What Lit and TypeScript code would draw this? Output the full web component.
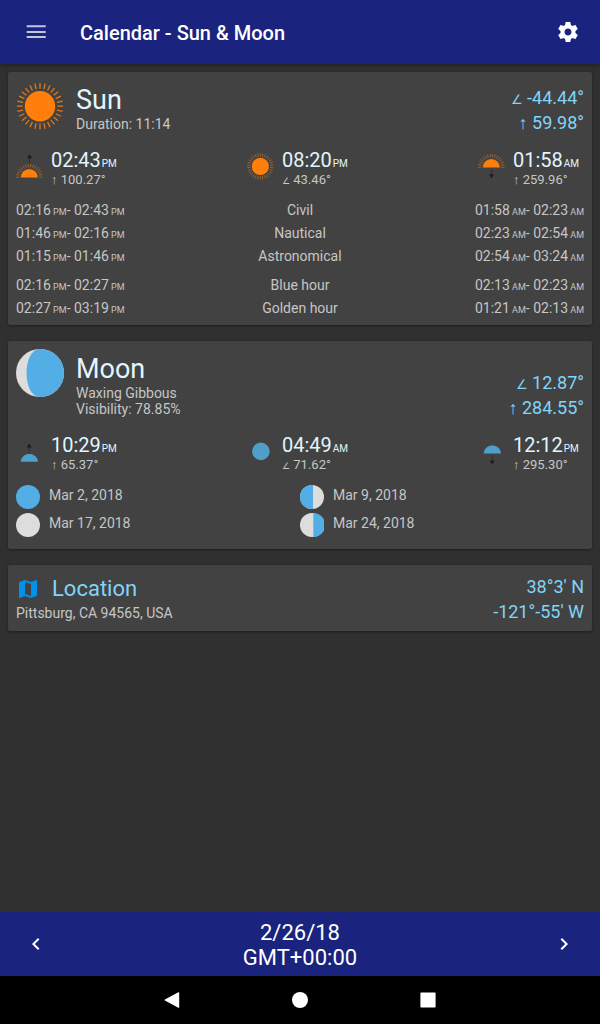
import { LitElement, html, svg, css } from "lit";
import { customElement, property } from "lit/decorators.js";

type EventKind = "rise" | "transit" | "set";

interface SkyEvent {
  kind: EventKind;
  label: string;
  time: string;
  half: string;
  sign: "up" | "angle";
  value: string;
}

interface Span {
  name: string;
  morning: [string, string];
  evening: [string, string];
}

const SUN_EVENTS: SkyEvent[] = [
  { kind: "rise", label: "Sunrise", time: "02:43", half: "PM", sign: "up", value: "100.27°" },
  { kind: "transit", label: "Solar noon", time: "08:20", half: "PM", sign: "angle", value: "43.46°" },
  { kind: "set", label: "Sunset", time: "01:58", half: "AM", sign: "up", value: "259.96°" },
];

const MOON_EVENTS: SkyEvent[] = [
  { kind: "rise", label: "Moonrise", time: "10:29", half: "PM", sign: "up", value: "65.37°" },
  { kind: "transit", label: "Moon transit", time: "04:49", half: "AM", sign: "angle", value: "71.62°" },
  { kind: "set", label: "Moonset", time: "12:12", half: "PM", sign: "up", value: "295.30°" },
];

const TWILIGHT: Span[] = [
  { name: "Civil", morning: ["02:16", "02:43"], evening: ["01:58", "02:23"] },
  { name: "Nautical", morning: ["01:46", "02:16"], evening: ["02:23", "02:54"] },
  { name: "Astronomical", morning: ["01:15", "01:46"], evening: ["02:54", "03:24"] },
];

const HOURS: Span[] = [
  { name: "Blue hour", morning: ["02:16", "02:27"], evening: ["02:13", "02:23"] },
  { name: "Golden hour", morning: ["02:27", "03:19"], evening: ["01:21", "02:13"] },
];

const PHASES = [
  { date: "Mar 2, 2018", shape: "full" },
  { date: "Mar 9, 2018", shape: "last" },
  { date: "Mar 17, 2018", shape: "new" },
  { date: "Mar 24, 2018", shape: "first" },
];

const sign = (kind: "up" | "angle") =>
  kind === "up"
    ? html`<span class="sign">↑</span>`
    : html`<span class="sign angle">∠</span>`;

/* Zero line height keeps these small runs from stretching the line they sit in. */
const inlineStyles = css`
  .sign {
    font-family: "Liberation Sans", sans-serif;
    line-height: 0;
  }
  .angle {
    font-family: "DejaVu Sans", sans-serif;
    font-size: 13px;
  }
  .half {
    font-size: 9px;
    line-height: 0;
  }
`;

/* Rays spaced evenly on a circle, from angle "from" to angle "to" in degrees. */
const rays = (cx: number, cy: number, r1: number, r2: number, step: number, from: number, to: number) => {
  let d = "";
  for (let a = from; a <= to; a += step) {
    const t = (a * Math.PI) / 180;
    const x = Math.cos(t);
    const y = Math.sin(t);
    d += `M${(cx + x * r1).toFixed(2)} ${(cy - y * r1).toFixed(2)}L${(cx + x * r2).toFixed(2)} ${(cy - y * r2).toFixed(2)}`;
  }
  return d;
};

@customElement("sky-icon")
class SkyIcon extends LitElement {
  @property() body: "sun" | "moon" = "sun";
  @property() kind: EventKind = "rise";

  static styles = css`
    :host {
      display: block;
      width: 27px;
      height: 28px;
    }
    svg {
      display: block;
    }
  `;

  private sun() {
    if (this.kind === "transit") {
      return svg`
        <circle cx="13.3" cy="13.4" r="8.6" fill="#ff7f0a"></circle>
        <path d=${rays(13.3, 13.4, 9.9, 13.2, 12, 6, 365)} stroke="#c96f1e" stroke-width="0.7"></path>`;
    }
    const y = this.kind === "rise" ? 24.6 : 14.6;
    return svg`
      <path d="M4.7 ${y}a8.6 8.6 0 0 1 17.2 0z" fill="#ff7f0a"></path>
      <path d=${rays(13.3, y - 0.4, 9.9, 13.3, 12, 0, 180)} stroke="#c96f1e" stroke-width="0.7"></path>
      ${this.kind === "rise"
        ? svg`<path d="M13.5 1.2l2.5 4h-5z" fill="#1c1c1c"></path><path d="M13.5 5v5" stroke="#262626" stroke-width="0.7"></path>`
        : svg`<path d="M13.5 25.2l2.5-4h-5z" fill="#1c1c1c"></path><path d="M13.5 16.5v5" stroke="#262626" stroke-width="0.7"></path>`}`;
  }

  private moon() {
    if (this.kind === "transit") {
      return svg`<circle cx="13.9" cy="13.4" r="8.8" fill="#509fcb"></circle>`;
    }
    return this.kind === "rise"
      ? svg`
        <path d="M4.7 23.8C5.6 13.4 21 13.4 22 23.8z" fill="#509fcb"></path>
        <path d="M13.2 5.6l2.5 4h-5z" fill="#1c1c1c"></path>
        <path d="M13.2 9v6" stroke="#262626" stroke-width="0.7"></path>`
      : svg`
        <path d="M5.7 15.4C6.6 5 22 5 23 15.4z" fill="#509fcb"></path>
        <path d="M14.2 26.4l2.5-4h-5z" fill="#1c1c1c"></path>
        <path d="M14.2 17v6" stroke="#262626" stroke-width="0.7"></path>`;
  }

  render() {
    return html`<svg width="27" height="28" viewBox="0 0 27 28" aria-hidden="true">
      ${this.body === "sun" ? this.sun() : this.moon()}
    </svg>`;
  }
}

@customElement("sky-events")
class SkyEvents extends LitElement {
  @property() body: "sun" | "moon" = "sun";
  @property({ attribute: false }) items: SkyEvent[] = [];

  static styles = [
    inlineStyles,
    css`
      :host {
        display: block;
      }
      .list {
        display: flex;
        justify-content: space-between;
        margin: 0;
        padding: 0;
        list-style: none;
      }
      .item {
        display: grid;
        grid-template-columns: 27px 71px;
        column-gap: 8px;
      }
      .icon {
        padding-top: 5px;
      }
      .time {
        color: #e1f5fe;
        font-size: 20px;
        line-height: 24px;
        white-space: nowrap;
      }
      .half {
        margin-left: 1px;
        font-size: 10px;
      }
      .value {
        font-size: 13px;
        line-height: 16px;
        white-space: nowrap;
      }
      .angle {
        font-size: 9px;
      }
    `,
  ];

  render() {
    return html`<ul class="list">
      ${this.items.map(
        (e) => html`<li class="item" aria-label=${e.label}>
          <div class="icon"><sky-icon .body=${this.body} .kind=${e.kind}></sky-icon></div>
          <div>
            <div class="time">${e.time}<span class="half">${e.half}</span></div>
            <div class="value">${sign(e.sign)} ${e.value}</div>
          </div>
        </li>`
      )}
    </ul>`;
  }
}

@customElement("app-root")
class AppRoot extends LitElement {
  static styles = [
    inlineStyles,
    css`
      :host {
        display: flex;
        flex-direction: column;
        min-height: 100vh;
        background: #303030;
        color: #c6c6c6;
        font-family: Roboto, "Liberation Sans", sans-serif;
        font-size: 14px;
        line-height: 16px;
      }
      button {
        display: grid;
        place-items: center;
        width: 40px;
        height: 40px;
        padding: 0;
        border: 0;
        background: none;
        color: #fff;
        cursor: pointer;
      }
      svg {
        display: block;
      }
      h1,
      h2,
      p,
      ul {
        margin: 0;
        padding: 0;
      }
      .bar {
        display: flex;
        align-items: center;
        height: 64px;
        padding: 0 12px 0 16px;
        background: #1a237e;
        box-shadow: 0 1px 4px rgba(0, 0, 0, 0.4);
      }
      .bar-title {
        flex: 1;
        margin-left: 24px;
        padding-top: 2px;
        color: #fff;
        font-size: 20px;
        font-weight: 500;
        line-height: 26px;
      }
      .cards {
        flex: 1;
        display: flex;
        flex-direction: column;
        gap: 16px;
        padding: 8px;
      }
      .card {
        padding: 8px;
        border-radius: 2px;
        background: #424242;
        box-shadow: 0 1px 3px rgba(0, 0, 0, 0.4);
      }
      .sun {
        padding-bottom: 5px;
      }
      .moon {
        padding-bottom: 12px;
      }
      .head {
        display: flex;
        align-items: flex-end;
        margin-bottom: 13px;
      }
      .portrait {
        align-self: flex-start;
        margin-right: 12px;
      }
      .about {
        flex: 1;
        padding: 4px 0 3px;
      }
      .name {
        color: #e1f5fe;
        font-size: 27px;
        font-weight: 400;
        line-height: 32px;
      }
      .reading {
        color: #81d4fa;
        font-size: 18px;
        line-height: 25px;
        text-align: right;
      }
      .spans {
        width: 100%;
        margin-top: 11px;
        border-collapse: collapse;
        table-layout: fixed;
      }
      .spans td,
      .spans th {
        padding: 0;
        font-weight: 400;
        line-height: 23px;
        text-align: left;
        white-space: nowrap;
      }
      .spans th {
        text-align: center;
      }
      .spans td:last-child {
        text-align: right;
      }
      .spans tbody + tbody::before {
        content: "";
        display: table-row;
        height: 6px;
      }
      .phases {
        display: grid;
        grid-template-columns: 1fr 1fr;
        row-gap: 4px;
        margin-top: 12px;
        list-style: none;
      }
      .phase {
        display: flex;
        gap: 9px;
        line-height: 21px;
      }
      .place {
        display: flex;
        justify-content: space-between;
        padding-bottom: 7px;
      }
      .place .reading {
        padding-top: 1px;
      }
      .place-title {
        display: flex;
        align-items: center;
        gap: 12px;
        height: 32px;
        color: #81d4fa;
        font-size: 22px;
        font-weight: 400;
      }
      .day {
        display: flex;
        align-items: center;
        justify-content: space-between;
        height: 64px;
        padding: 0 16px;
        background: #1a237e;
        color: #fff;
        font-size: 22px;
        line-height: 25px;
        text-align: center;
      }
      .date {
        padding-top: 2px;
      }
      .system {
        display: flex;
        align-items: center;
        justify-content: center;
        gap: 88px;
        height: 48px;
        background: #000;
      }
    `,
  ];

  private moonPhase(shape: string) {
    const blue = "#53aee6";
    const grey = "#dddddd";
    const base = shape === "full" ? blue : grey;
    const half =
      shape === "last" ? "M13 0H12a12 12 0 0 0 0 24h1z" : shape === "first" ? "M13.3 0a12 12 0 0 1 0 24z" : "";
    return html`<svg width="24" height="24" viewBox="0 0 24 24" aria-hidden="true">
      <circle cx="12" cy="12" r="12" fill=${base}></circle>
      <path d=${half} fill=${blue}></path>
    </svg>`;
  }

  private range([from, to]: [string, string], half: string) {
    return html`${from}<span class="half"> ${half}</span>- ${to}<span class="half"> ${half}</span>`;
  }

  private spans(rows: Span[]) {
    return html`<tbody>
      ${rows.map(
        (r) => html`<tr>
          <td>${this.range(r.morning, "PM")}</td>
          <th scope="row">${r.name}</th>
          <td>${this.range(r.evening, "AM")}</td>
        </tr>`
      )}
    </tbody>`;
  }

  render() {
    return html`
      <header class="bar">
        <button type="button" aria-label="Menu">
          <svg width="24" height="24" viewBox="0 0 24 24">
            <path d="M2.7 6.2h19M2.7 11.9h19M2.7 17.1h19" stroke="#c3c5dd" stroke-width="2"></path>
          </svg>
        </button>
        <h1 class="bar-title">Calendar - Sun &amp; Moon</h1>
        <button type="button" aria-label="Settings">
          <svg width="24" height="24" viewBox="0 0 24 24" fill="#fff">
            <path
              d="M19.43 12.98c.04-.32.07-.64.07-.98s-.03-.66-.07-.98l2.11-1.65c.19-.15.24-.42.12-.64l-2-3.46c-.12-.22-.39-.3-.61-.22l-2.49 1c-.52-.4-1.08-.73-1.69-.98l-.38-2.65C14.46 2.18 14.25 2 14 2h-4c-.25 0-.46.18-.49.42l-.38 2.65c-.61.25-1.17.59-1.69.98l-2.49-1c-.23-.09-.49 0-.61.22l-2 3.46c-.13.22-.07.49.12.64l2.11 1.65c-.04.32-.07.65-.07.98s.03.66.07.98l-2.11 1.65c-.19.15-.24.42-.12.64l2 3.46c.12.22.39.3.61.22l2.49-1c.52.4 1.08.73 1.69.98l.38 2.65c.03.24.24.42.49.42h4c.25 0 .46-.18.49-.42l.38-2.65c.61-.25 1.17-.59 1.69-.98l2.49 1c.23.09.49 0 .61-.22l2-3.46c.12-.22.07-.49-.12-.64l-2.11-1.65zM12 15.5c-1.93 0-3.5-1.57-3.5-3.5s1.57-3.5 3.5-3.5 3.5 1.57 3.5 3.5-1.57 3.5-3.5 3.5z"
            ></path>
          </svg>
        </button>
      </header>

      <main class="cards">
        <section class="card sun">
          <div class="head">
            <svg class="portrait" width="48" height="52" viewBox="0 0 48 52" aria-hidden="true">
              <circle cx="24" cy="26.2" r="15.2" fill="#ff7f0a"></circle>
              <path d=${rays(24, 26.2, 17.4, 23.2, 90 / 7, 0, 359)} stroke="#e0781a" stroke-width="1.3"></path>
            </svg>
            <div class="about">
              <h2 class="name">Sun</h2>
              <p>Duration: 11:14</p>
            </div>
            <div class="reading">
              <div>${sign("angle")} -44.44°</div>
              <div>${sign("up")} 59.98°</div>
            </div>
          </div>
          <sky-events .body=${"sun"} .items=${SUN_EVENTS}></sky-events>
          <table class="spans" aria-label="Twilight">
            ${this.spans(TWILIGHT)} ${this.spans(HOURS)}
          </table>
        </section>

        <section class="card moon">
          <div class="head">
            <svg class="portrait" width="48" height="48" viewBox="0 0 48 48" aria-hidden="true">
              <circle cx="24" cy="24" r="24" fill="#dddddd"></circle>
              <path d="M24 0a24 24 0 0 1 0 48C6 48 6 0 24 0z" fill="#53aee6"></path>
            </svg>
            <div class="about">
              <h2 class="name">Moon</h2>
              <p>Waxing Gibbous</p>
              <p>Visibility: 78.85%</p>
            </div>
            <div class="reading">
              <div>${sign("angle")} 12.87°</div>
              <div>${sign("up")} 284.55°</div>
            </div>
          </div>
          <sky-events .body=${"moon"} .items=${MOON_EVENTS}></sky-events>
          <ul class="phases">
            ${PHASES.map((p) => html`<li class="phase">${this.moonPhase(p.shape)}<span>${p.date}</span></li>`)}
          </ul>
        </section>

        <section class="card place">
          <div>
            <h2 class="place-title">
              <svg width="24" height="24" viewBox="0 0 24 24" fill="#0091ea" aria-hidden="true">
                <path
                  d="M20.5 3l-.16.03L15 5.1 9 3 3.36 4.9c-.21.07-.36.25-.36.48V20.5c0 .28.22.5.5.5l.16-.03L9 18.9l6 2.1 5.64-1.9c.21-.07.36-.25.36-.48V3.5c0-.28-.22-.5-.5-.5zM15 19l-6-2.11V5l6 2.11V19z"
                ></path>
              </svg>
              Location
            </h2>
            <p>Pittsburg, CA 94565, USA</p>
          </div>
          <div class="reading">
            <div>38°3' N</div>
            <div>-121°-55' W</div>
          </div>
        </section>
      </main>

      <footer>
        <div class="day">
          <button type="button" aria-label="Previous day">
            <svg width="24" height="24" viewBox="0 0 24 24" fill="#fff">
              <path d="M15.41 7.41L14 6l-6 6 6 6 1.41-1.41L10.83 12z"></path>
            </svg>
          </button>
          <div class="date">
            <div>2/26/18</div>
            <div>GMT+00:00</div>
          </div>
          <button type="button" aria-label="Next day">
            <svg width="24" height="24" viewBox="0 0 24 24" fill="#fff">
              <path d="M10 6L8.59 7.41 13.17 12l-4.58 4.59L10 18l6-6z"></path>
            </svg>
          </button>
        </div>
        <nav class="system" aria-label="System">
          <button type="button" aria-label="Back">
            <svg width="24" height="24" viewBox="0 0 24 24">
              <path d="M5.2 12L18.6 4.8v14.4z" fill="#fff" stroke="#fff" stroke-width="1.2" stroke-linejoin="round"></path>
            </svg>
          </button>
          <button type="button" aria-label="Home">
            <svg width="24" height="24" viewBox="0 0 24 24"><circle cx="12" cy="12" r="8" fill="#fff"></circle></svg>
          </button>
          <button type="button" aria-label="Overview">
            <svg width="24" height="24" viewBox="0 0 24 24">
              <rect x="4.4" y="4.4" width="15.2" height="15.2" rx="1" fill="#fff"></rect>
            </svg>
          </button>
        </nav>
      </footer>
    `;
  }
}
